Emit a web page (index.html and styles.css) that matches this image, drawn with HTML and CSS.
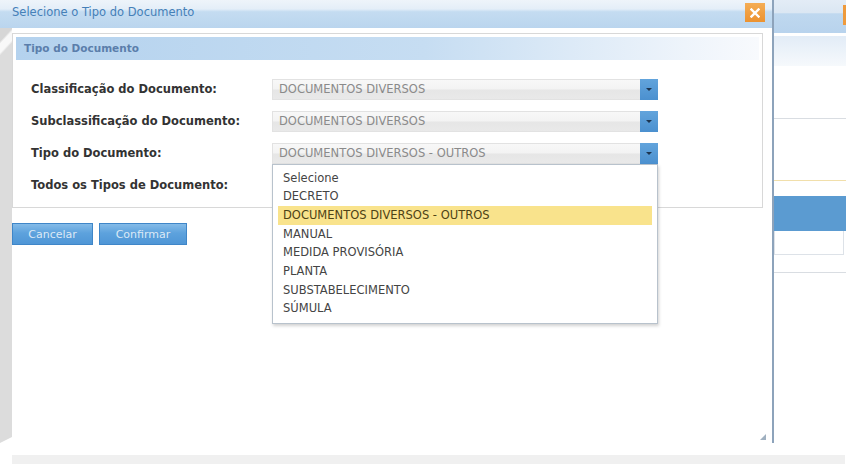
FILE: index.html
```html
<!DOCTYPE html>
<html lang="pt-BR">
<head>
    <meta charset="UTF-8">
    <title>Selecione o Tipo do Documento</title>
    <link rel="stylesheet" href="styles.css">
</head>
<body>
    <div class="screen">
        <div class="dialog">
            <div class="titlebar">
                <span class="title">Selecione o Tipo do Documento</span>
                <a class="close" href="#">
                    <svg width="10" height="10" viewBox="0 0 10 10"><path d="M1.5 1.5 L8.5 8.5 M8.5 1.5 L1.5 8.5" stroke="#fff" stroke-width="2.4" stroke-linecap="square"/></svg>
                </a>
            </div>
            <div class="dialog-body">
                <div class="edge"></div>
                <div class="content">
                    <div class="box">
                        <div class="legend">Tipo do Documento</div>
                        <div class="rows">
                            <div class="row">
                                <label>Classificação do Documento:</label>
                                <div class="select"><span>DOCUMENTOS DIVERSOS</span><i class="arrow"></i></div>
                            </div>
                            <div class="row">
                                <label>Subclassificação do Documento:</label>
                                <div class="select"><span>DOCUMENTOS DIVERSOS</span><i class="arrow"></i></div>
                            </div>
                            <div class="row">
                                <label>Tipo do Documento:</label>
                                <div class="select"><span>DOCUMENTOS DIVERSOS - OUTROS</span><i class="arrow"></i>
                                    <ul class="options">
                                        <li>Selecione</li>
                                        <li>DECRETO</li>
                                        <li class="current">DOCUMENTOS DIVERSOS - OUTROS</li>
                                        <li>MANUAL</li>
                                        <li>MEDIDA PROVISÓRIA</li>
                                        <li>PLANTA</li>
                                        <li>SUBSTABELECIMENTO</li>
                                        <li>SÚMULA</li>
                                    </ul>
                                </div>
                            </div>
                            <div class="row">
                                <label>Todos os Tipos de Documento:</label>
                            </div>
                        </div>
                    </div>
                    <div class="actions">
                        <button class="btn cancel">Cancelar</button>
                        <button class="btn confirm">Confirmar</button>
                    </div>
                </div>
                <svg class="grip" width="6" height="6" viewBox="0 0 6 6"><path d="M6 0 L6 6 L0 6 Z" fill="#9fb0c0"/></svg>
            </div>
        </div>
        <div class="behind">
            <div class="b-title"><i class="b-close"></i></div>
            <div class="b-head"></div>
            <div class="b-line"></div>
            <div class="b-line yellow"></div>
            <div class="b-bar"></div>
            <div class="b-box"></div>
            <div class="b-line last"></div>
        </div>
    </div>
    <div class="footer-bar"></div>
</body>
</html>
```

FILE: styles.css
```css
* {
    box-sizing: border-box;
}

body {
    margin: 0;
    width: 862px;
    height: 464px;
    overflow: hidden;
    background-color: #ffffff;
    font-family: "DejaVu Sans", Verdana, sans-serif;
    font-size: 11.5px;
}

.screen {
    display: flex;
    height: 455px;
}

.dialog {
    width: 774px;
    height: 443px;
    border-right: 2px solid #8da3bb;
    display: flex;
    flex-direction: column;
}

.titlebar {
    height: 28px;
    display: flex;
    align-items: flex-start;
    justify-content: space-between;
    padding: 0 7px 0 12px;
    background: linear-gradient(#eef4fa 0, #e4eef8 32%, #c4dcf1 42%, #bad5ee 100%);
}

.title {
    color: #4580b8;
    line-height: 14px;
    margin-top: 5px;
}

.close {
    width: 20px;
    height: 19px;
    margin-top: 3px;
    background: linear-gradient(#f4ad55, #ec9230);
    display: flex;
    align-items: center;
    justify-content: center;
}

.dialog-body {
    flex: 1;
    display: flex;
    position: relative;
}

.edge {
    width: 12px;
    background: linear-gradient(133deg, #d6d6d6 0 9px, #f8f8f8 11px 17px, #dcdcdc 19px);
    clip-path: polygon(0 0, 100% 0, 100% calc(100% - 6px), 0 100%);
}

.content {
    flex: 1;
    padding-top: 5px;
}

.box {
    width: 751px;
    border: 1px solid #d8d8d8;
    padding: 3px 3px 6px;
}

.legend {
    height: 23px;
    line-height: 23px;
    padding-left: 8px;
    font-size: 10.5px;
    font-weight: bold;
    color: #5b7eab;
    background: linear-gradient(to right, #b4d2ee, #c6ddf2 55%, #eef4fb 90%, #f8fafd);
}

.rows {
    margin-top: 13px;
}

.row {
    display: flex;
    align-items: center;
    height: 32px;
    padding-left: 15px;
}

.row label {
    width: 241px;
    font-weight: bold;
    color: #333333;
}

.select {
    position: relative;
    width: 386px;
    height: 21px;
    display: flex;
    align-items: center;
    padding-left: 6px;
    border: 1px solid #e2e2e2;
    background: linear-gradient(#f8f8f8 0, #f3f3f3 48%, #e6e6e6 52%, #e9e9e9 100%);
    color: #8a8a8a;
}

.arrow {
    margin-left: auto;
    width: 18px;
    height: 21px;
    margin-right: -1px;
    background: linear-gradient(#62a4dc, #4b90cf);
    display: flex;
    align-items: center;
    justify-content: center;
}

.arrow::after {
    content: "";
    border-left: 3px solid transparent;
    border-right: 3px solid transparent;
    border-top: 3px solid #1d3550;
}

.options {
    position: absolute;
    top: 20px;
    left: -1px;
    width: 386px;
    height: 160px;
    margin: 0;
    padding: 4px 5px;
    list-style: none;
    background-color: #ffffff;
    border: 1px solid #b8c2cc;
    box-shadow: 1px 2px 3px rgba(0, 0, 0, 0.18);
    color: #444444;
    z-index: 2;
}

.options li {
    line-height: 18.7px;
    padding-left: 5px;
}

.options li.current {
    background-color: #f9e38c;
    color: #4d4216;
}

.actions {
    display: flex;
    gap: 6px;
    margin-top: 15px;
}

.btn {
    height: 22px;
    padding: 0;
    border: 1px solid #3f86c8;
    background: linear-gradient(#84bbe8, #5da2dd 45%, #4f96d6);
    color: #dce9f6;
    font-family: "DejaVu Sans", Verdana, sans-serif;
    font-size: 11px;
}

.cancel {
    width: 81px;
}

.confirm {
    width: 88px;
}

.grip {
    position: absolute;
    right: 6px;
    bottom: 3px;
}

.behind {
    width: 72px;
    display: flex;
    flex-direction: column;
}

.b-title {
    height: 33px;
    display: flex;
    justify-content: flex-end;
    background: linear-gradient(#e3ecf6 0, #dbe7f3 38%, #bfd8ef 42%, #b8d3ed 100%);
}

.b-close {
    width: 3px;
    height: 20px;
    margin-top: 5px;
    background-color: #ee9a3c;
}

.b-head {
    height: 30px;
    margin-top: 3px;
    background: linear-gradient(#e2ecf7, #f6f9fc);
}

.b-line {
    height: 1px;
    margin-top: 52px;
    background-color: #d9dde2;
}

.b-line.yellow {
    margin-top: 61px;
    background-color: #f1dfab;
}

.b-bar {
    height: 35px;
    margin-top: 15px;
    background-color: #5b9bd1;
}

.b-box {
    height: 24px;
    border: 1px solid #dde2e8;
    border-top: none;
    margin-right: 2px;
}

.b-line.last {
    margin-top: 17px;
}

.footer-bar {
    margin-left: 12px;
    width: 833px;
    height: 9px;
    background-color: #f0f0f0;
}
```
